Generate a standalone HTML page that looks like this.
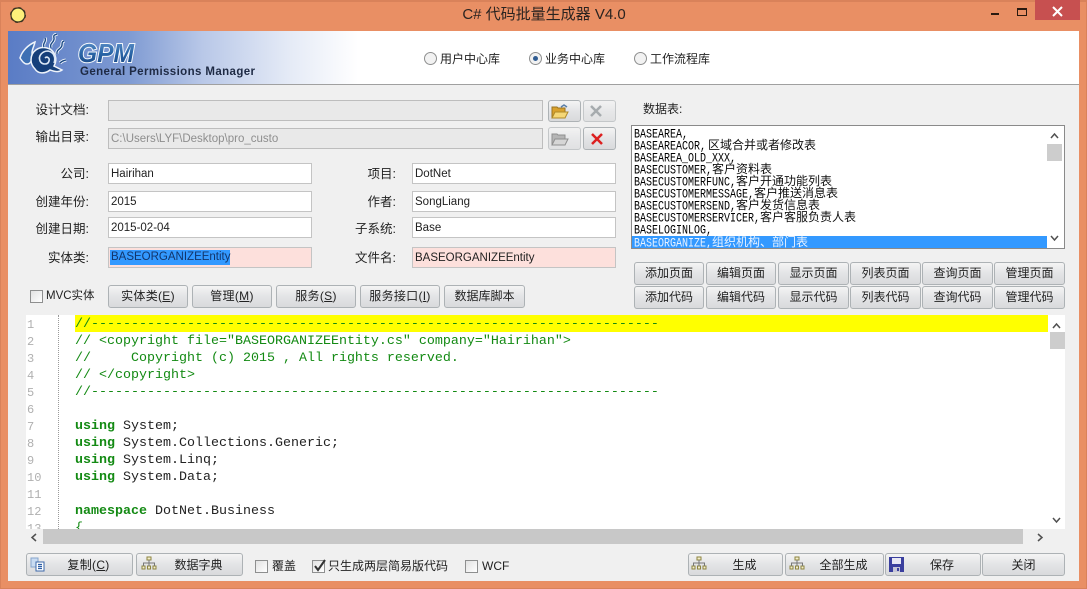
<!DOCTYPE html>
<html lang="zh"><head><meta charset="utf-8"><title>C# 代码批量生成器 V4.0</title>
<style>
*{box-sizing:border-box}
html,body{margin:0;padding:0}
body{width:1087px;height:589px;overflow:hidden;position:relative;background:#e98f64;font:12px "Liberation Sans","Noto Sans CJK SC",sans-serif;color:#222}
div,span,svg{position:absolute}
b.k{font-weight:bold;color:#138a13}
.l{text-align:right;height:18px;line-height:18px;margin-top:1px;white-space:nowrap;width:89px;font-size:12.5px}
.f{height:21px;line-height:20px;border:1px solid #c4c4c4;background:#fff;padding-left:2px;white-space:nowrap;color:#222;font-size:11.5px}
.d{background:#e9e9e9;border-color:#bdbdbd;color:#8e8e8e}
.p{background:#fde0dc}
.b{height:23px;line-height:21px;border:1px solid #adb2b5;border-radius:3px;background:linear-gradient(#f4f4f4,#e3e4e6 50%,#d9dadc);text-align:center;color:#222;white-space:nowrap}
.s{letter-spacing:.3px}
.o{line-height:22px;padding-left:18px}
.c{width:13px;height:13px;border:1px solid #8e8f8f;background:linear-gradient(135deg,#e2e2e2,#fff)}
.t{height:16px;line-height:16px;white-space:nowrap}
.r{width:13px;height:13px;border:1px solid #8e8f8f;border-radius:50%;background:#f2f2f2}
.li{left:2px;height:12px;white-space:nowrap;font:12px/12px "Liberation Sans","Noto Sans CJK SC",sans-serif;color:#111}
.li i{display:inline-block;font:normal 10px/12px "Liberation Mono",monospace;transform:scaleY(1.25);color:#000}
.cl{left:49px;height:17px;white-space:pre;font:13.33px/17px "Liberation Mono",monospace;color:#222}
.g{color:#138a13}
.n{left:1px;height:17px;font:12px/19px "Liberation Mono",monospace;color:#b0b0b0}
</style></head><body>
<div style="left:0;top:0;width:1087px;height:2px;background:#d9825a"></div>
<div style="left:0;top:0;width:1px;height:589px;background:#d9825a"></div>
<div style="left:1086px;top:0;width:1px;height:589px;background:#d9825a"></div>
<div style="left:0;top:588px;width:1087px;height:1px;background:#d9825a"></div>
<svg style="left:9px;top:6px" width="18" height="18" viewBox="0 0 18 18"><circle cx="9" cy="9" r="7" fill="#fdf07a"/><circle cx="9" cy="9" r="7" fill="none" stroke="#3a3320" stroke-width="1.2"/><circle cx="9" cy="9" r="7.6" fill="none" stroke="#3a3320" stroke-width=".8" stroke-dasharray="3 3"/></svg>
<div style="left:344px;top:5px;width:400px;height:20px;line-height:20px;text-align:center;font-size:15px;color:#2a2320">C# 代码批量生成器 V4.0</div>
<div style="left:991px;top:13px;width:8px;height:2px;background:#2a1a10"></div>
<div style="left:1017px;top:8px;width:10px;height:8px;border:1px solid #2a1a10;border-top-width:2px"></div>
<div style="left:1035px;top:0;width:45px;height:20px;background:#c75050"></div>
<svg style="left:1051px;top:6px" width="13" height="11" viewBox="0 0 13 11"><path d="M2 1l9 9M11 1l-9 9" stroke="#fff" stroke-width="2"/></svg>

<div style="left:8px;top:31px;width:1071px;height:550px;background:#f0f0f0"></div>
<div style="left:8px;top:31px;width:1071px;height:53px;background:linear-gradient(90deg,#5a7cc5 0,#7e9ad2 120px,#b9c8e8 195px,#e4eaf6 280px,#fff 350px)"></div>
<div style="left:8px;top:84px;width:1071px;height:1px;background:#a0a0a0"></div>
<svg style="left:18px;top:33px" width="50" height="46" viewBox="0 0 50 46">
<path d="M2 25C4 18 10 12 17 9c-1 5-3 7-3 11 1 6-1 11-5 11-3 0-5-3-7-6z" fill="#3d70b4" stroke="#eef3fa" stroke-width="1.5"/>
<path d="M13 27c0-9 8-14 16-12 8 2 11 11 7 18l8 4c-4 3-9 1-12 0-5 4-12 4-15-1-3-3-4-6-4-9z" fill="#153f7a" stroke="#eef3fa" stroke-width="1.5"/>
<path d="M27 25c2-2 5 0 4 3-1 4-7 4-9 0-2-5 2-10 8-10 6 1 8 7 6 12" fill="none" stroke="#dbe8f6" stroke-width="1.6"/>
<path d="M26 14c-2-4 3-5 1-9M33 15c-2-5 4-6 3-10s2-3 3-4M39 21c-1-5 5-5 5-9s1-3 2-4M42 30c3-3 3-2 6-3" fill="none" stroke="#f2f6fb" stroke-width="3.2"/>
<path d="M26 14c-2-4 3-5 1-9M33 15c-2-5 4-6 3-10s2-3 3-4M39 21c-1-5 5-5 5-9s1-3 2-4M42 30c3-3 3-2 6-3" fill="none" stroke="#1b4a86" stroke-width="1.4"/>
</svg>
<svg style="left:75px;top:38px" width="70" height="30"><defs><linearGradient id="gp" x1="0" y1="0" x2="0" y2="1"><stop offset="0" stop-color="#6a9ad0"/><stop offset=".5" stop-color="#2a66a8"/><stop offset="1" stop-color="#16437f"/></linearGradient></defs><text x="3" y="24" font-family="Liberation Sans" font-weight="bold" font-style="italic" font-size="26" fill="url(#gp)" stroke="#f4f8fc" stroke-width="2" paint-order="stroke" textLength="56" lengthAdjust="spacingAndGlyphs">GPM</text></svg>
<svg style="left:78px;top:62px" width="180" height="18"><text x="2" y="13" font-family="Liberation Sans" font-weight="bold" font-size="11.5" fill="#1e2a44" textLength="175" lengthAdjust="spacing">General Permissions Manager</text></svg>

<div class="r" style="left:424px;top:52px"></div><div class="t" style="left:440px;top:51px">用户中心库</div>
<div class="r" style="left:529px;top:52px"></div><div style="left:533px;top:56px;width:5px;height:5px;border-radius:50%;background:#2f5c92"></div><div class="t" style="left:545px;top:51px">业务中心库</div>
<div class="r" style="left:634px;top:52px"></div><div class="t" style="left:650px;top:51px">工作流程库</div>

<div class="l" style="left:0;top:100px">设计文档:</div>
<div class="l" style="left:0;top:127px">输出目录:</div>
<div class="f d" style="left:108px;top:100px;width:435px"></div>
<div class="f d" style="left:108px;top:128px;width:435px">C:\Users\LYF\Desktop\pro_custo</div>
<div class="b" style="left:548px;top:100px;width:33px;height:22px"></div>
<svg style="left:551px;top:104px" width="18" height="16" viewBox="0 0 18 16"><path d="M1 3h5l1 1h7v10H1z" fill="#d9a12c" stroke="#9a7420"/><path d="M1 14l3-6h13l-3 6z" fill="#f5d777" stroke="#b08a2a"/><path d="M10 3l3-2 3 2" fill="none" stroke="#5a7fa8" stroke-width="1.5"/></svg>
<div class="b" style="left:583px;top:100px;width:33px;height:22px;opacity:.65"></div>
<svg style="left:589px;top:105px" width="14" height="12"><path d="M2 1l10 10M12 1L2 11" stroke="#a6abae" stroke-width="2.5"/></svg>
<div class="b" style="left:548px;top:127px;width:33px;height:23px;opacity:.65"></div>
<svg style="left:551px;top:131px" width="18" height="16" viewBox="0 0 18 16"><path d="M1 3h5l1 1h7v10H1z" fill="#b5b5b5" stroke="#8f8f8f"/><path d="M1 14l3-6h13l-3 6z" fill="#d6d6d6" stroke="#8f8f8f"/></svg>
<div class="b" style="left:583px;top:127px;width:33px;height:23px"></div>
<svg style="left:590px;top:133px" width="14" height="12"><path d="M2 1l10 10M12 1L2 11" stroke="#dc2020" stroke-width="2.5"/></svg>

<div class="l" style="left:0;top:164px">公司:</div>
<div class="l" style="left:0;top:192px">创建年份:</div>
<div class="l" style="left:0;top:219px">创建日期:</div>
<div class="l" style="left:0;top:248px">实体类:</div>
<div class="f" style="left:108px;top:163px;width:204px">Hairihan</div>
<div class="f" style="left:108px;top:191px;width:204px">2015</div>
<div class="f" style="left:108px;top:217px;width:204px">2015-02-04</div>
<div class="f p" style="left:108px;top:247px;width:204px"></div>
<div style="left:110px;top:250px;width:120px;height:15px;background:#3399ff"></div>
<div class="t" style="left:111px;top:249px;color:#12356b;font-size:11.5px">BASEORGANIZEEntity</div>

<div class="l" style="left:307px;top:164px">项目:</div>
<div class="l" style="left:307px;top:192px">作者:</div>
<div class="l" style="left:307px;top:219px">子系统:</div>
<div class="l" style="left:307px;top:248px">文件名:</div>
<div class="f" style="left:412px;top:163px;width:204px">DotNet</div>
<div class="f" style="left:412px;top:191px;width:204px">SongLiang</div>
<div class="f" style="left:412px;top:217px;width:204px">Base</div>
<div class="f p" style="left:412px;top:247px;width:204px">BASEORGANIZEEntity</div>

<div class="t" style="left:643px;top:101px">数据表:</div>
<div style="left:631px;top:125px;width:434px;height:124px;border:1px solid #8a8a8a;background:#fff;overflow:hidden">
<div class="li" style="top:1px"><i>BASEAREA,</i></div>
<div class="li" style="top:13px"><i>BASEAREACOR,</i><span style="position:static;margin-left:2px">区域合并或者修改表</span></div>
<div class="li" style="top:25px"><i>BASEAREA_OLD_XXX,</i></div>
<div class="li" style="top:37px"><i>BASECUSTOMER,</i>客户资料表</div>
<div class="li" style="top:49px"><i>BASECUSTOMERFUNC,</i>客户开通功能列表</div>
<div class="li" style="top:61px"><i>BASECUSTOMERMESSAGE,</i>客户推送消息表</div>
<div class="li" style="top:73px"><i>BASECUSTOMERSEND,</i>客户发货信息表</div>
<div class="li" style="top:85px"><i>BASECUSTOMERSERVICER,</i>客户客服负责人表</div>
<div class="li" style="top:97px"><i>BASELOGINLOG,</i></div>
<div style="left:0;top:110px;width:415px;height:12px;background:#3399ff"></div>
<div class="li" style="top:110px;color:#e8f2ff"><i style="color:#e8f2ff">BASEORGANIZE,</i>组织机构、部门表</div>
</div>
<div style="left:1047px;top:144px;width:15px;height:17px;background:#cdcdcd"></div>
<svg style="left:1049px;top:132px" width="11" height="8"><path d="M2 6l3.5-4L9 6" fill="none" stroke="#505050" stroke-width="1.5"/></svg>
<svg style="left:1049px;top:234px" width="11" height="8"><path d="M2 2l3.5 4L9 2" fill="none" stroke="#505050" stroke-width="1.5"/></svg>

<div class="b" style="left:634px;top:262px;width:70px">添加页面</div>
<div class="b" style="left:706px;top:262px;width:70px">编辑页面</div>
<div class="b" style="left:778px;top:262px;width:71px">显示页面</div>
<div class="b" style="left:850px;top:262px;width:71px">列表页面</div>
<div class="b" style="left:922px;top:262px;width:71px">查询页面</div>
<div class="b" style="left:994px;top:262px;width:71px">管理页面</div>
<div class="b" style="left:634px;top:286px;width:70px">添加代码</div>
<div class="b" style="left:706px;top:286px;width:70px">编辑代码</div>
<div class="b" style="left:778px;top:286px;width:71px">显示代码</div>
<div class="b" style="left:850px;top:286px;width:71px">列表代码</div>
<div class="b" style="left:922px;top:286px;width:71px">查询代码</div>
<div class="b" style="left:994px;top:286px;width:71px">管理代码</div>

<div class="c" style="left:30px;top:290px"></div><div class="t" style="left:46px;top:288px;font-size:11.5px">MVC实体</div>
<div class="b s" style="left:108px;top:285px;width:80px">实体类(<u>E</u>)</div>
<div class="b s" style="left:192px;top:285px;width:80px">管理(<u>M</u>)</div>
<div class="b s" style="left:276px;top:285px;width:80px">服务(<u>S</u>)</div>
<div class="b s" style="left:360px;top:285px;width:80px">服务接口(<u>I</u>)</div>
<div class="b" style="left:444px;top:285px;width:81px">数据库脚本</div>

<div style="left:26px;top:315px;width:1039px;height:230px;background:#fff;overflow:hidden">
<div style="left:49px;top:0;width:973px;height:17px;background:#ffff00"></div>
<div style="left:32px;top:0;width:1px;height:214px;border-left:1px dotted #9a9a9a"></div>
<div class="n" style="top:1px">1</div><div class="n" style="top:18px">2</div><div class="n" style="top:35px">3</div><div class="n" style="top:52px">4</div><div class="n" style="top:69px">5</div><div class="n" style="top:86px">6</div><div class="n" style="top:103px">7</div><div class="n" style="top:120px">8</div><div class="n" style="top:137px">9</div><div class="n" style="top:154px">10</div><div class="n" style="top:171px">11</div><div class="n" style="top:188px">12</div>
<div class="cl g" style="top:1px">//-----------------------------------------------------------------------</div>
<div class="cl g" style="top:18px">// &lt;copyright file="BASEORGANIZEEntity.cs" company="Hairihan"&gt;</div>
<div class="cl g" style="top:35px">//     Copyright (c) 2015 , All rights reserved.</div>
<div class="cl g" style="top:52px">// &lt;/copyright&gt;</div>
<div class="cl g" style="top:69px">//-----------------------------------------------------------------------</div>
<div class="cl" style="top:103px"><b class="k">using</b> System;</div>
<div class="cl" style="top:120px"><b class="k">using</b> System.Collections.Generic;</div>
<div class="cl" style="top:137px"><b class="k">using</b> System.Linq;</div>
<div class="cl" style="top:154px"><b class="k">using</b> System.Data;</div>
<div class="cl" style="top:188px"><b class="k">namespace</b> DotNet.Business</div>
<div class="cl g" style="top:205px">{</div>
<div class="n" style="top:205px">13</div>
<div style="left:0;top:214px;width:1039px;height:16px;background:#f0f0f0"></div>
<div style="left:17px;top:214px;width:980px;height:15px;background:#c8c8c8"></div>
<div style="left:1022px;top:0;width:17px;height:214px;background:#fff"></div>
<div style="left:1024px;top:17px;width:15px;height:17px;background:#cdcdcd"></div>
</div>
<svg style="left:1051px;top:322px" width="11" height="8"><path d="M2 6l3.5-4L9 6" fill="none" stroke="#505050" stroke-width="1.5"/></svg>
<svg style="left:1051px;top:516px" width="11" height="8"><path d="M2 2l3.5 4L9 2" fill="none" stroke="#505050" stroke-width="1.5"/></svg>
<svg style="left:30px;top:532px" width="8" height="11"><path d="M6 2L2 5.5 6 9" fill="none" stroke="#505050" stroke-width="1.5"/></svg>
<svg style="left:1036px;top:532px" width="8" height="11"><path d="M2 2l4 3.5L2 9" fill="none" stroke="#505050" stroke-width="1.5"/></svg>

<div class="b o s" style="left:26px;top:553px;width:107px">复制(<u>C</u>)</div>
<svg style="left:30px;top:557px" width="16" height="15" viewBox="0 0 16 15"><path d="M1 1h7v9H1z" fill="#c9dcf2" stroke="#86a5cc"/><path d="M6 5h8v9H6z" fill="#fff" stroke="#3c68a8"/><path d="M8 7.500h4M8 9.500h4M8 11.500h4" stroke="#2e5fa8" stroke-width="1.2"/></svg>
<div class="b o" style="left:136px;top:553px;width:107px">数据字典</div>
<svg style="left:141px;top:556px" width="16" height="14" viewBox="0 0 16 14"><path d="M6 1h4v3H6zM1 10h3v3H1zM6.500 10h3v3h-3zM12 10h3v3h-3z" fill="#f3eecb" stroke="#8c8440"/><path d="M8 4v6M2.500 10V7h11v3" fill="none" stroke="#777"/></svg>
<div class="c" style="left:255px;top:560px"></div><div class="t" style="left:272px;top:558px">覆盖</div>
<div class="c" style="left:312px;top:560px"></div>
<svg style="left:313px;top:558px" width="14" height="15"><path d="M2 8l3 4 7-10" fill="none" stroke="#333" stroke-width="2"/></svg>
<div class="t" style="left:328px;top:558px">只生成两层简易版代码</div>
<div class="c" style="left:465px;top:560px"></div><div class="t" style="left:482px;top:558px">WCF</div>

<div class="b o" style="left:688px;top:553px;width:95px">生成</div>
<svg style="left:691px;top:556px" width="16" height="14" viewBox="0 0 16 14"><path d="M6 1h4v3H6zM1 10h3v3H1zM6.500 10h3v3h-3zM12 10h3v3h-3z" fill="#f3eecb" stroke="#8c8440"/><path d="M8 4v6M2.500 10V7h11v3" fill="none" stroke="#777"/></svg>
<div class="b o" style="left:785px;top:553px;width:99px">全部生成</div>
<svg style="left:789px;top:556px" width="16" height="14" viewBox="0 0 16 14"><path d="M6 1h4v3H6zM1 10h3v3H1zM6.500 10h3v3h-3zM12 10h3v3h-3z" fill="#f3eecb" stroke="#8c8440"/><path d="M8 4v6M2.500 10V7h11v3" fill="none" stroke="#777"/></svg>
<div class="b o" style="left:885px;top:553px;width:96px">保存</div>
<svg style="left:889px;top:557px" width="15" height="15" viewBox="0 0 15 15"><path d="M0 0h15v15H0z" fill="#3a3f9e"/><path d="M3 1h9v6H3z" fill="#e8e8f4"/><path d="M4 10h7v5H4z" fill="#c6c6d6"/><path d="M8 11h2v3H8z" fill="#3a3f9e"/></svg>
<div class="b" style="left:982px;top:553px;width:83px;line-height:22px">关闭</div>
</body></html>
